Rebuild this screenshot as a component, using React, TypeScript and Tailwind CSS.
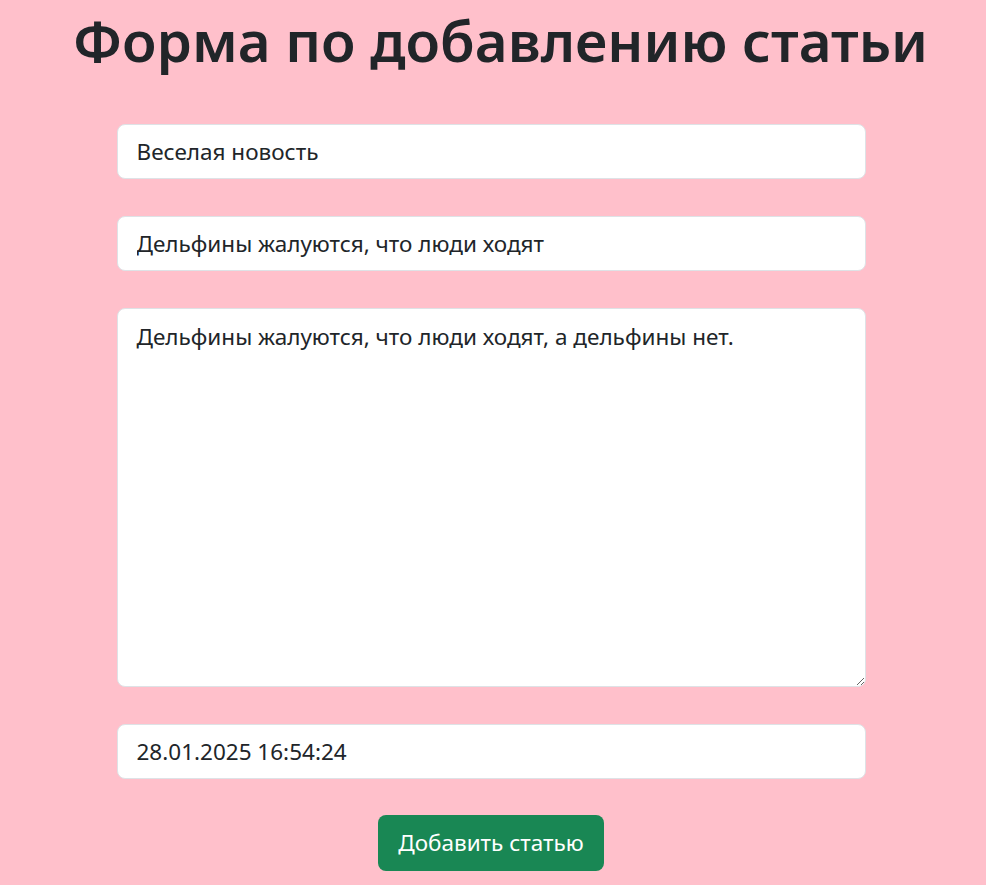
import { useState } from "react";

const field =
  "h-[55px] w-full rounded-lg border border-[#dee2e6] bg-white px-[19px] text-[22.5px] leading-[30px] text-[#212529] outline-none";

export default function App() {
  const [title, setTitle] = useState("Веселая новость");
  const [lead, setLead] = useState("Дельфины жалуются, что люди ходят");
  const [body, setBody] = useState(
    "Дельфины жалуются, что люди ходят, а дельфины нет."
  );
  const [date, setDate] = useState("28.01.2025 16:54:24");

  return (
    <main className="min-h-screen bg-[#ffc0cb] font-['Noto_Sans',sans-serif] text-[#212529]">
      <div className="flex flex-col items-center pt-[7px]">
        <h1 className="ml-[15px] text-[56.5px] font-semibold leading-[67px]">
          Форма по добавлению статьи
        </h1>
        <form
          className="mr-[4px] mt-[50px] flex w-[749px] flex-col gap-[37px]"
          onSubmit={(e) => e.preventDefault()}
        >
          <input
            className={field}
            value={title}
            onChange={(e) => setTitle(e.target.value)}
          />
          <input
            className={field}
            value={lead}
            onChange={(e) => setLead(e.target.value)}
          />
          <textarea
            className={`${field} h-[379px] pt-[13px]`}
            value={body}
            onChange={(e) => setBody(e.target.value)}
          />
          <input
            className={field}
            value={date}
            onChange={(e) => setDate(e.target.value)}
          />
          <button
            type="submit"
            className="mx-auto -mt-px h-[56px] rounded-lg bg-[#198754] px-5 text-[22.5px] leading-[30px] text-white"
          >
            Добавить статью
          </button>
        </form>
      </div>
    </main>
  );
}
